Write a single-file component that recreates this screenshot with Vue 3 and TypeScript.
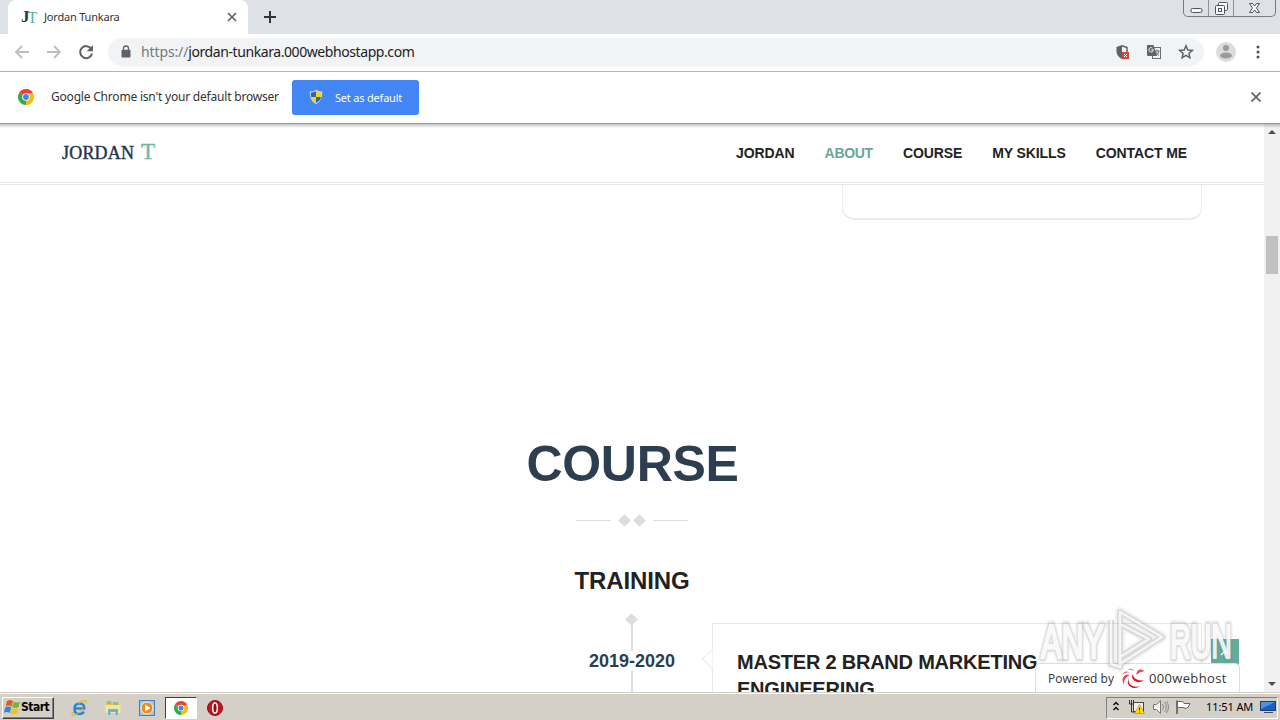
<template>
  <div class="screen">
    <!-- tab strip -->
    <div class="tab-strip">
      <div class="tab">
        <span class="favicon"><b>J</b><i>T</i></span>
        <span class="tab-title">Jordan Tunkara</span>
        <svg class="tab-close" viewBox="0 0 10 10"><path d="M1 1l8 8M9 1L1 9" /></svg>
      </div>
      <svg class="new-tab" viewBox="0 0 12 12"><path d="M6 0v12M0 6h12" /></svg>
      <div class="window-buttons">
        <span class="win-btn">
          <svg width="25" height="16"><rect x="7" y="8.5" width="11" height="4" rx="1.5" /></svg>
        </span>
        <span class="win-btn">
          <svg width="25" height="16">
            <rect x="9.5" y="2.5" width="9" height="8" rx="1" />
            <rect x="6.500" y="5.500" width="9" height="9" rx="1" />
            <rect x="9.500" y="8.500" width="3" height="3" />
          </svg>
        </span>
        <span class="win-btn win-close">
          <svg width="40" height="16">
            <path d="M15.500 3.500h3l2 2.500 2-2.500h3l-3 4.500 3 4.500h-3l-2-2.500-2 2.500h-3l3-4.500z" />
          </svg>
        </span>
      </div>
    </div>

    <!-- toolbar -->
    <div class="toolbar">
      <svg class="nav-icon disabled" viewBox="0 0 16 16"><path d="M15 8H2M8 2L2 8l6 6" /></svg>
      <svg class="nav-icon disabled" viewBox="0 0 16 16"><path d="M1 8h13M8 2l6 6-6 6" /></svg>
      <svg class="nav-icon" viewBox="0 0 16 16">
        <path d="M13.300 5A6 6 0 1 0 14 9.500" />
        <path class="solid" d="M15 1v6.300H8.700z" />
      </svg>
      <div class="omnibox">
        <svg class="lock" viewBox="0 0 10 13">
          <path d="M2.500 6V3.500a2.500 2.500 0 0 1 5 0V6" />
          <rect x="0.500" y="4.800" width="9" height="7.700" rx="1" />
        </svg>
        <span class="url"><span class="scheme">https://</span>jordan-tunkara.000webhostapp.com</span>
        <div class="page-actions">
          <svg width="16" height="16" viewBox="0 0 16 16">
            <path d="M8 1L2.500 3v4.500C2.500 11 5 13.500 8 15z" fill="#5f6368" />
            <path d="M8 1.700l5 1.900V8" fill="none" stroke="#5f6368" stroke-width="1.500" />
            <rect x="8" y="8" width="7" height="7" fill="#db4437" />
            <path d="M10 10l3 3m0-3l-3 3" stroke="#fff" />
          </svg>
          <svg width="16" height="16" viewBox="0 0 16 16">
            <rect x="6.500" y="3.500" width="8" height="11" fill="#f1f3f4" stroke="#6b6e72" />
            <path d="M1 1h6.500l3.500 11H2a1 1 0 0 1-1-1z" fill="#5f6368" />
            <path d="M7.500 5.800H5.300M7.300 6A2.200 2.200 0 1 1 6.500 4.100" fill="none" stroke="#f1f3f4" />
            <path d="M9 7h4.500M11 5.500V7m2 0q-.5 3-3 5M10 8q1 2.500 3 3.500" fill="none" stroke="#6b6e72" />
          </svg>
          <svg width="16" height="16" viewBox="0 0 16 16">
            <path
              d="M8 1.800l1.800 4.200 4.500.4-3.400 3 1 4.400L8 11.400l-3.900 2.400 1-4.400-3.400-3 4.500-.4z"
              fill="none"
              stroke="#5f6368"
              stroke-width="1.500"
            />
          </svg>
        </div>
      </div>
      <svg class="avatar" viewBox="0 0 20 20">
        <circle cx="10" cy="10" r="10" fill="#dcdcdc" />
        <circle cx="10" cy="6" r="3" fill="#9b9b9b" />
        <ellipse cx="10" cy="13.500" rx="6" ry="3" fill="#9b9b9b" />
      </svg>
      <svg class="kebab" viewBox="0 0 4 14">
        <circle v-for="y in [2, 7, 12]" :key="y" cx="2" :cy="y" r="1.500" />
      </svg>
    </div>

    <!-- default browser bar -->
    <div class="infobar">
      <svg class="chrome" viewBox="0 0 16 16">
        <path d="M8 8L1.070 4A8 8 0 0 1 14.930 4z" fill="#ea4335" />
        <path d="M8 8L14.930 4A8 8 0 0 1 8 16z" fill="#fbbc05" />
        <path d="M8 8L8 16A8 8 0 0 1 1.070 4z" fill="#34a853" />
        <path d="M8 4.300h6.800A8 8 0 0 1 8 16l3.200-6z" fill="#fbbc05" />
        <circle cx="8" cy="8" r="3.800" fill="#fff" />
        <circle cx="8" cy="8" r="2.900" fill="#4285f4" />
      </svg>
      <span class="infobar-text">Google Chrome isn't your default browser</span>
      <button class="default-btn">
        <svg width="14" height="16" viewBox="0 0 14 16">
          <path d="M7 .7Q10 2.700 13.300 2.400 13.800 11.500 7 15.300 .2 11.500.7 2.400 4 2.700 7 .7z" fill="#c9d6d8" />
          <path d="M7 2.200v5.800H1.900V3.500Q5 3.600 7 2.200z" fill="#2467b5" />
          <path d="M7 2.200v5.800h5.100V3.500Q9 3.600 7 2.200z" fill="#fcd116" />
          <path d="M7 8H1.900Q2.800 11.800 7 14z" fill="#fcd116" />
          <path d="M7 8h5.100Q11.200 11.800 7 14z" fill="#2467b5" />
        </svg>
        <span>Set as default</span>
      </button>
      <svg class="infobar-close" viewBox="0 0 10 10"><path d="M.5.5l9 9M9.500.5l-9 9" /></svg>
    </div>

    <!-- web page -->
    <div class="viewport">
      <div class="page">
        <header class="site-header">
          <div class="logo">JORDAN <span>T</span></div>
          <nav class="menu">
            <a v-for="item in menu" :key="item" :class="{ active: item === current }">{{ item }}</a>
          </nav>
        </header>
        <div class="about-card"></div>

        <h2 class="section-title">COURSE</h2>
        <div class="separator">
          <span class="rule"></span>
          <span class="diamond"></span>
          <span class="diamond"></span>
          <span class="rule"></span>
        </div>
        <h3 class="subtitle">TRAINING</h3>

        <div class="timeline">
          <div class="track">
            <span class="diamond"></span>
            <span class="line"></span>
            <span class="year">2019-2020</span>
            <span class="line"></span>
          </div>
          <div class="entry">
            <svg class="pointer" viewBox="0 0 11 22"><path d="M10.500 1L.8 11l9.700 10" /></svg>
            <h4>MASTER 2 BRAND MARKETING<br />ENGINEERING</h4>
          </div>
        </div>
      </div>

      <div class="scrollbar">
        <span class="arrow up"></span>
        <span class="thumb"></span>
        <span class="arrow down"></span>
      </div>

      <div class="to-top">
        <svg width="10" height="6" viewBox="0 0 10 6"><path d="M1 5l4-4 4 4" /></svg>
      </div>

      <div class="powered">
        <span>Powered by</span>
        <svg width="24" height="22" viewBox="0 0 24 22">
          <path d="M23 13.500Q17 17 13 13.500 10 10.500 11.500 7q1 4 4.500 5.500 3 1.300 7 1z" fill="#e2202f" />
          <path d="M23.500 4Q18 5 15.500 8q-.5-4 3-5.500 2.500-.5 5 1.500z" fill="#ee4350" />
          <path d="M8 10Q6 17 12 19.200q3.500 1 7-.2-3 2.500-7.500 1.800Q4.500 19 8 10z" fill="#c91425" />
          <path d="M8.500 8.500Q3 10 2.500 18q-2.500-8 2-10 2-.8 4 .5zM9.500 6Q5 4 1 8q3-6 8.500-2zM13 4Q10 1.500 6.500 3q4-3 6.500 1z" fill="#ee4350" />
        </svg>
        <span class="host">000webhost</span>
      </div>

      <svg class="watermark" viewBox="0 0 208 72">
        <defs>
          <g id="mark">
            <text x="5" y="52" textLength="63" lengthAdjust="spacingAndGlyphs">ANY</text>
            <text x="134" y="52" textLength="62" lengthAdjust="spacingAndGlyphs">RUN</text>
            <path d="M75 14v44l9 3V6l42 25-42 27M84 18l29 15-29 18" />
          </g>
        </defs>
        <use href="#mark" class="mark-halo" />
        <use href="#mark" class="mark-shadow" />
        <use href="#mark" class="mark-light" />
      </svg>
    </div>

    <!-- taskbar -->
    <div class="taskbar">
      <div class="start">
        <svg width="17" height="16" viewBox="0 0 17 16">
          <path d="M3 2q3-2 6 0L7.500 7.500q-3-2-6 0z" fill="#e8582c" />
          <path d="M9.700 2.500q3 2 6.300 0L14.500 8q-3 2-6.300 0z" fill="#76b82a" />
          <path d="M1.300 8.500q3-2 6 0L5.800 14q-3-2-6 0z" fill="#2a8bd8" />
          <path d="M8 9q3 2 6.300 0l-1.500 5.500q-3 2-6.300 0z" fill="#fbbc15" />
        </svg>
        <span>Start</span>
      </div>
      <div class="quick">
        <span class="app">
          <svg width="18" height="18" viewBox="0 0 18 18">
            <path d="M5 9.500h9.200Q14.500 4.500 9.500 4.500T4.500 10q0 5 5 5 3 0 4.300-2.500" fill="none" stroke="#2388d9" stroke-width="2.500" />
            <path d="M3.500 12Q0 17.500 4 16.300 9 14.500 13 9.500M8 4.500q10-6 8 0" fill="none" stroke="#e8b625" stroke-width="1.200" />
          </svg>
        </span>
        <span class="app">
          <svg width="18" height="18" viewBox="0 0 18 18">
            <path d="M2 3h5l1 1h7v9H2z" fill="#e7c35b" />
            <path d="M3 2h4v3H3zM9 3h5v3H9z" fill="#8dc08b" />
            <path d="M1 6h16l-1 8H2z" fill="#f7e494" />
            <path d="M4 10h10v6h-2.500v-3h-5v3H4z" fill="#64b5e8" />
          </svg>
        </span>
        <span class="app">
          <svg width="18" height="18" viewBox="0 0 18 18">
            <rect x="1.500" y="1.500" width="15" height="15" fill="#9cc8ee" stroke="#437fb9" />
            <circle cx="9" cy="9" r="6" fill="#f28a1a" stroke="#fff3d2" />
            <path d="M7 5.500v7L12.500 9z" fill="#fff" />
          </svg>
        </span>
        <span class="app pressed">
          <svg width="14" height="14" viewBox="0 0 16 16">
            <path d="M8 8L1.070 4A8 8 0 0 1 14.930 4z" fill="#ea4335" />
            <path d="M8 8L14.930 4A8 8 0 0 1 8 16z" fill="#fbbc05" />
            <path d="M8 8L8 16A8 8 0 0 1 1.070 4z" fill="#34a853" />
            <circle cx="8" cy="8" r="3.800" fill="#fff" />
            <circle cx="8" cy="8" r="2.900" fill="#4285f4" />
          </svg>
        </span>
        <span class="app">
          <svg width="16" height="16" viewBox="0 0 16 16">
            <circle cx="8" cy="8" r="7.500" fill="#c3161c" stroke="#871014" />
            <ellipse cx="8" cy="8" rx="2.300" ry="5" fill="#8d0d12" stroke="#fff" stroke-width="1.500" />
          </svg>
        </span>
      </div>
      <div class="tray">
        <svg width="8" height="12" viewBox="0 0 8 12" class="chevrons">
          <path d="M1.500 4l2.500-2.500L6.500 4M1.500 9l2.500-2.500L6.500 9" />
        </svg>
        <svg class="network" width="18" height="16" viewBox="0 0 18 16">
          <rect x="5.500" y="3.500" width="10" height="9" fill="#eee" stroke="#444" />
          <path d="M1.500 1v4h4V1M3.500 1v12H8" fill="none" stroke="#333" />
          <path d="M11.500 5.500l5 9h-10z" fill="#ffe100" stroke="#a78600" stroke-width=".6" />
          <path d="M11.500 8.500v3m0 1v1" stroke="#222" />
        </svg>
        <svg class="volume" width="17" height="16" viewBox="0 0 17 16">
          <path d="M1.500 5.500h3l4-4v13l-4-4h-3z" fill="#f5f5f5" stroke="#777" />
          <path d="M10.500 5q2 3 0 6M12.500 3q3.500 5 0 10M14.500 2q4 6 0 12" fill="none" stroke="#888" />
        </svg>
        <svg class="flag" width="17" height="16" viewBox="0 0 17 16">
          <path d="M2 1.500V15" stroke="#555" stroke-width="1.500" />
          <path d="M2.500 2.500h5l1.500 2h6q-1.500 4.500-4 5L8 8.500H2.500z" fill="#fff" stroke="#666" />
        </svg>
        <span class="clock">11:51 AM</span>
        <svg class="desktop" width="16" height="14" viewBox="0 0 16 14">
          <rect x=".5" y="1.500" width="15" height="9" fill="#1d60bd" stroke="#223c70" />
          <path d="M1 2h14L1 9z" fill="#4a92e4" />
          <path d="M4 12.500h9" stroke="#3b4a63" />
        </svg>
      </div>
    </div>
  </div>
</template>

<script setup lang="ts">
import { ref } from 'vue'

const menu: string[] = ['JORDAN', 'ABOUT', 'COURSE', 'MY SKILLS', 'CONTACT ME']
const current = ref<string>('ABOUT')
</script>

<style>
body {
  margin: 0;
  overflow: hidden;
}
</style>

<style scoped>
.screen {
  display: flex;
  flex-direction: column;
  width: 1280px;
  height: 720px;
  overflow: hidden;
  background: #fff;
  font-family: 'Noto Sans', sans-serif;
}

.screen * {
  box-sizing: border-box;
}

svg {
  display: block;
  flex: none;
}

/* 标签栏 */
.tab-strip {
  display: flex;
  align-items: center;
  height: 34px;
  flex: none;
  padding-left: 8px;
  background: #dee1e6;
}

.tab {
  display: flex;
  align-items: center;
  width: 240px;
  height: 34px;
  padding: 0 11px 0 13px;
  border-radius: 8px 8px 0 0;
  background: #fff;
}

.favicon {
  display: flex;
  width: 23px;
  height: 20px;
  font: 17px/20px 'Liberation Serif', serif;
  color: #24384a;
}

.favicon i {
  margin-left: -2px;
  font-size: 16px;
  line-height: 22px;
  font-style: normal;
  color: #62ae9c;
}

.tab-title {
  flex: 1;
  padding-bottom: 1px;
  font-size: 11px;
  letter-spacing: -0.2px;
  color: #333;
}

.tab-close,
.infobar-close {
  width: 10px;
  height: 10px;
  fill: none;
  stroke: #5f6368;
  stroke-width: 1.7;
}

.new-tab {
  width: 12px;
  height: 12px;
  margin-left: 16px;
  stroke: #303338;
  stroke-width: 2;
}

.window-buttons {
  display: flex;
  align-self: flex-start;
  height: 17px;
  margin-left: auto;
  margin-right: 4px;
  border: 1px solid #777b83;
  border-top: 0;
  border-radius: 0 0 5px 5px;
}

.win-btn {
  width: 25px;
  border-right: 1px solid #8d9198;
}

.win-close {
  width: 41px;
  border: 0;
}

.win-btn svg {
  fill: #f6f7f8;
  stroke: #51545a;
}

/* 工具栏 */
.toolbar {
  display: flex;
  align-items: center;
  height: 38px;
  flex: none;
  padding: 0 20px 2px 14px;
  border-bottom: 1px solid #b2b4b5;
}

.nav-icon {
  width: 16px;
  height: 16px;
  margin-right: 16px;
  fill: none;
  stroke: #5f6368;
  stroke-width: 2;
}

.nav-icon.disabled {
  stroke: #bcbec0;
  stroke-width: 1.8;
}

.nav-icon .solid {
  fill: #5f6368;
  stroke: none;
}

.omnibox {
  display: flex;
  flex: 1;
  align-items: center;
  height: 28px;
  margin-left: -2px;
  padding: 0 10px 0 13px;
  border-radius: 14px;
  background: #f1f3f4;
}

.lock {
  width: 10px;
  height: 13px;
  margin-right: 10px;
  fill: none;
  stroke: #5f6368;
  stroke-width: 1.3;
}

.lock rect {
  fill: #5f6368;
  stroke: none;
}

.url {
  flex: 1;
  font-size: 14px;
  letter-spacing: -0.42px;
  color: #202124;
}

.scheme {
  letter-spacing: -0.12px;
  color: #74787c;
}

.page-actions {
  display: flex;
  gap: 16px;
}

.avatar {
  width: 20px;
  height: 20px;
  margin-left: 12px;
}

.kebab {
  width: 4px;
  height: 14px;
  margin-left: 20px;
  fill: #4d5156;
}

/* 默认浏览器提示 */
.infobar {
  display: flex;
  align-items: center;
  height: 52px;
  flex: none;
  padding: 0 19px 2px 18px;
  border-bottom: 1px solid #999;
}

.chrome {
  width: 16px;
  height: 16px;
}

.infobar-text {
  width: 228px;
  margin: 0 13px 0 17px;
  font-size: 12px;
  letter-spacing: -0.2px;
  color: #333;
  white-space: nowrap;
}

.default-btn {
  display: flex;
  align-items: center;
  gap: 12px;
  width: 127px;
  height: 35px;
  margin-top: 2px;
  padding: 0 0 1px 17px;
  border: 0;
  border-radius: 3px;
  background: #4285f4;
  font: 11px 'Noto Sans', sans-serif;
  letter-spacing: -0.2px;
  color: #fff;
  white-space: nowrap;
}

.infobar-close {
  margin-left: auto;
}

/* 页面 */
.viewport {
  position: relative;
  display: flex;
  height: 568px;
  flex: none;
  overflow: hidden;
}

.viewport::before {
  content: '';
  position: absolute;
  z-index: 2;
  inset: 0 0 auto;
  height: 4px;
  background: linear-gradient(rgba(0, 0, 0, 0.24), transparent);
}

.page {
  flex: 1;
  height: 568px;
  overflow: hidden;
  font-family: 'Liberation Sans', Arial, sans-serif;
}

.site-header {
  display: flex;
  align-items: center;
  justify-content: space-between;
  height: 61px;
  padding: 0 77px 1px 62px;
  border-bottom: 3px double #e7e7e7;
}

.logo {
  font: 18px/24px 'Liberation Serif', serif;
  color: #26344d;
  -webkit-text-stroke: 0.4px;
  letter-spacing: 0.2px;
}

.logo span {
  margin-left: 2px;
  font-size: 23px;
  line-height: 20px;
  color: #6eb9a2;
}

.menu {
  display: flex;
  gap: 30px;
  font-size: 14px;
  font-weight: 700;
  letter-spacing: -0.1px;
  color: #222;
}

.menu .active {
  letter-spacing: -0.3px;
  color: #68a798;
}

.about-card {
  width: 360px;
  height: 35px;
  margin-left: 842px;
  border: 1px solid #ececec;
  border-top: 0;
  border-bottom-width: 2px;
  border-radius: 0 0 12px 12px;
}

.section-title {
  margin: 214px 0 0;
  padding-left: 1px;
  font-size: 50px;
  line-height: 60px;
  letter-spacing: -0.3px;
  text-align: center;
  color: #2c3e50;
}

.separator {
  display: flex;
  align-items: center;
  justify-content: center;
  gap: 6px;
  height: 12px;
  margin-top: 20px;
}

.rule {
  width: 35px;
  height: 1px;
  margin: 0 3px;
  background: #ddd;
}

.diamond {
  width: 9px;
  height: 9px;
  flex: none;
  background: #ddd;
  transform: rotate(45deg);
}

.subtitle {
  margin: 39px 0 0;
  font-size: 24px;
  line-height: 32px;
  letter-spacing: -0.1px;
  text-align: center;
  color: #222;
}

.timeline {
  display: flex;
  align-items: flex-start;
  margin-top: 18px;
  padding-left: 582px;
}

.track {
  display: flex;
  flex-direction: column;
  align-items: center;
  width: 100px;
}

.track .diamond {
  margin-right: 2px;
}

.line {
  width: 2px;
  height: 27px;
  background: #ddd;
}

.year {
  font-size: 18px;
  font-weight: 700;
  line-height: 20px;
  color: #2c3e50;
}

.entry {
  position: relative;
  width: 490px;
  height: 120px;
  margin: 8px 0 0 30px;
  border: 1px solid #e7e7e7;
  padding: 25px 24px;
}

.pointer {
  position: absolute;
  top: 24px;
  left: -11px;
  width: 11px;
  height: 22px;
  fill: #fff;
  stroke: #e2e2e2;
}

.entry h4 {
  margin: 0;
  font-size: 20px;
  line-height: 27px;
  letter-spacing: -0.22px;
  white-space: nowrap;
  color: #222;
}

.scrollbar {
  display: flex;
  flex-direction: column;
  align-items: center;
  width: 16px;
  padding: 6px 0;
  background: #f1f1f1;
}

.arrow {
  border: 4px solid transparent;
  border-top: 0;
  border-bottom-color: #505050;
}

.arrow.down {
  margin-top: auto;
  transform: rotate(180deg);
}

.thumb {
  width: 12px;
  height: 38px;
  margin-top: 102px;
  background: #c1c1c1;
}

.to-top {
  position: absolute;
  top: 515px;
  left: 1211px;
  display: flex;
  align-items: center;
  justify-content: center;
  width: 28px;
  height: 28px;
  background: #63ab9c;
}

.to-top svg {
  fill: none;
  stroke: #fff;
  stroke-width: 1.5;
}

/* 水印 */
.watermark {
  position: absolute;
  top: 482px;
  left: 1036px;
  width: 208px;
  height: 72px;
  font: 48px 'Liberation Sans', sans-serif;
  stroke-linejoin: round;
  pointer-events: none;
}

.watermark use,
.watermark path {
  fill: none;
}

.mark-halo {
  stroke: rgba(130, 130, 130, 0.1);
  stroke-width: 10;
}

.mark-shadow {
  stroke: rgba(120, 120, 120, 0.2);
  stroke-width: 6;
}

.watermark .mark-light {
  fill: rgba(255, 255, 255, 0.75);
  stroke: rgba(255, 255, 255, 0.75);
  stroke-width: 2.5;
}

.powered {
  position: absolute;
  top: 539px;
  left: 1035px;
  display: flex;
  align-items: center;
  width: 205px;
  height: 29px;
  padding-left: 12px;
  border: 1px solid #ddd;
  border-bottom: 0;
  border-radius: 5px 5px 0 0;
  background: #fff;
  font: 12px 'Open Sans', sans-serif;
  color: #333;
  white-space: nowrap;
}

.powered svg {
  margin: 0 4px 0 7px;
}

.host {
  font-size: 13px;
  font-weight: 500;
  letter-spacing: 0.35px;
}

/* 任务栏 */
.taskbar {
  display: flex;
  align-items: center;
  height: 28px;
  flex: none;
  padding: 2px 2px 0;
  border-top: 1px solid #d4d0c8;
  box-shadow: inset 0 1px #fff;
  background: #d4d0c8;
}

.start {
  display: flex;
  align-items: center;
  width: 52px;
  height: 22px;
  padding: 0 0 1px 1px;
  border: 1px solid;
  border-color: #fff #404040 #404040 #fff;
  box-shadow: inset -1px -1px #808080;
  font: 700 12px 'DejaVu Sans Condensed', 'DejaVu Sans', sans-serif;
  letter-spacing: -0.5px;
  color: #000;
}

.quick {
  display: flex;
  gap: 2px;
  margin-left: 9px;
}

.app {
  display: flex;
  align-items: center;
  justify-content: center;
  width: 32px;
  height: 22px;
}

.app.pressed {
  border: 1px solid;
  border-color: #404040 #fff #fff #404040;
  background: #fff;
}

.tray {
  display: flex;
  align-items: center;
  width: 172px;
  height: 22px;
  margin-left: auto;
  padding: 0 0 2px 5px;
  border: 1px solid;
  border-color: #808080 #fff #fff #808080;
}

.chevrons {
  fill: none;
  stroke: #111;
  stroke-width: 1.5;
}

.network {
  margin-left: 8px;
}

.volume {
  margin-left: 6px;
}

.flag {
  margin-left: 6px;
}

.clock {
  width: 47px;
  margin-left: 14px;
  font-size: 11px;
  letter-spacing: -0.1px;
  color: #000;
  white-space: nowrap;
}

.desktop {
  margin-left: 7px;
}
</style>
